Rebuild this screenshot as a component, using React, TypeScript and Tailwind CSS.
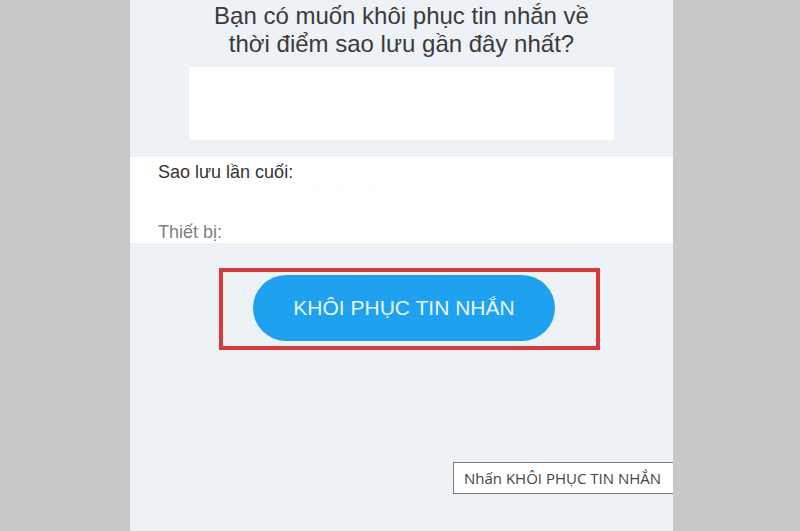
export default function App() {
  return (
    <div
      className="flex h-[531px] w-[800px] overflow-hidden bg-[#c8c8c8]"
      style={{ fontFamily: '"Liberation Sans", Arial, sans-serif' }}
    >
      {/* left frame */}
      <div className="w-[130px] shrink-0" />

      {/* phone screen */}
      <div className="flex w-[543px] shrink-0 flex-col bg-[#edf2f7]">
        <h1 className="pt-[2px] text-center text-[24px] leading-[28px] font-normal text-[#3a3a3a]">
          Bạn có muốn khôi phục tin nhắn về
          <br />
          thời điểm sao lưu gần đây nhất?
        </h1>

        <div className="mx-auto mt-[9px] h-[73px] w-[425px] bg-white" />

        <div className="mt-[17px] flex h-[86px] flex-col bg-white pl-[28px]">
          <p className="pt-[3px] text-[18px] leading-[24px] text-[#333]">Sao lưu lần cuối:</p>
          <p className="ml-[150px] text-[12px] leading-[12px] text-[#f0f0f0] blur-[1px]">
            ··· ·· ···· ·· ····
          </p>
          <p className="mt-[26px] text-[18px] leading-[20px] text-[#808080]">Thiết bị:</p>
        </div>

        {/* highlighted button */}
        <div className="ml-[89px] mt-[25px] h-[82px] w-[381px] border-4 border-[#d93a3a] pl-[30px] pt-[3px]">
          <button className="flex h-[66px] w-[302px] items-center justify-center rounded-full bg-[#1ea1ef] text-[21px] text-[#eaf5ff]">
            KHÔI PHỤC TIN NHẮN
          </button>
        </div>

        {/* caption */}
        <div
          className="mt-[112px] flex h-[32px] w-[220px] items-center self-end border-y border-l border-[#7a7a7a] bg-white pl-[10px] text-[15px] text-[#444]"
          style={{ fontFamily: '"Open Sans", sans-serif' }}
        >
          Nhấn KHÔI PHỤC TIN NHẮN
        </div>
      </div>

      {/* right frame */}
      <div className="flex-1" />
    </div>
  );
}
